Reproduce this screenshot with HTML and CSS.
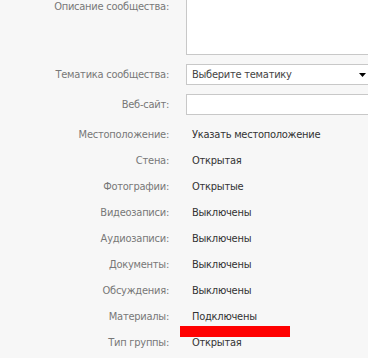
FILE: index.html
```html
<!DOCTYPE html>
<html lang="ru">
<head>
<meta charset="utf-8">
<link rel="stylesheet" href="styles.css">
</head>
<body>
<div class="form">
  <div class="row row-desc">
    <div class="label">Описание сообщества:</div>
    <div class="field"><div class="textarea"></div></div>
  </div>
  <div class="row row-input">
    <div class="label">Тематика сообщества:</div>
    <div class="field">
      <div class="select">
        <span class="select-text">Выберите тематику</span>
        <svg class="arrow" width="7" height="4" viewBox="0 0 7 4"><polygon points="0,0 7,0 3.5,4" fill="#000"/></svg>
      </div>
    </div>
  </div>
  <div class="row row-input">
    <div class="label">Веб-сайт:</div>
    <div class="field"><div class="input"></div></div>
  </div>
  <div class="static">
    <div class="row row-static"><div class="label">Местоположение:</div><div class="value">Указать местоположение</div></div>
    <div class="row row-static"><div class="label">Стена:</div><div class="value">Открытая</div></div>
    <div class="row row-static"><div class="label">Фотографии:</div><div class="value">Открытые</div></div>
    <div class="row row-static"><div class="label">Видеозаписи:</div><div class="value">Выключены</div></div>
    <div class="row row-static"><div class="label">Аудиозаписи:</div><div class="value">Выключены</div></div>
    <div class="row row-static"><div class="label">Документы:</div><div class="value">Выключены</div></div>
    <div class="row row-static"><div class="label">Обсуждения:</div><div class="value">Выключены</div></div>
    <div class="row row-static"><div class="label">Материалы:</div><div class="value marked">Подключены<span class="mark"></span></div></div>
    <div class="row row-static"><div class="label">Тип группы:</div><div class="value">Открытая</div></div>
  </div>
</div>
</body>
</html>
```

FILE: styles.css
```css
html, body {
  margin: 0;
  padding: 0;
  background: #f7f7f7;
  overflow: hidden;
}
body {
  font-family: "DejaVu Sans Condensed", "DejaVu Sans", sans-serif;
  font-size: 11px;
  line-height: 14px;
  letter-spacing: -0.25px;
  color: #333;
}
.form {
  margin-top: -6px;
}
.row {
  display: flex;
  column-gap: 17px;
}
.label {
  flex: none;
  width: 169px;
  text-align: right;
  color: #777;
}
.field {
  flex: none;
  width: 183px;
}
.row-desc {
  margin-bottom: 9px;
}
.row-desc .label {
  padding-top: 6px;
}
.textarea {
  box-sizing: border-box;
  height: 61px;
  background: #fff;
  border: 1px solid #c8c8c8;
}
.row-input {
  align-items: center;
  margin-bottom: 9px;
}
.select,
.input {
  box-sizing: border-box;
  height: 21px;
  background: #fff;
  border: 1px solid #c8c8c8;
}
.select {
  display: flex;
  align-items: center;
  justify-content: space-between;
  padding: 0 2px 0 5px;
  color: #444;
}
.arrow {
  display: block;
}
.static {
  margin-top: -2px;
}
.row-static {
  height: 26px;
  align-items: center;
}
.value {
  padding-left: 6px;
  color: #333;
}
.marked {
  position: relative;
}
.mark {
  position: absolute;
  left: -6px;
  top: 16px;
  width: 110px;
  height: 11px;
  background: #ff0000;
}
```
